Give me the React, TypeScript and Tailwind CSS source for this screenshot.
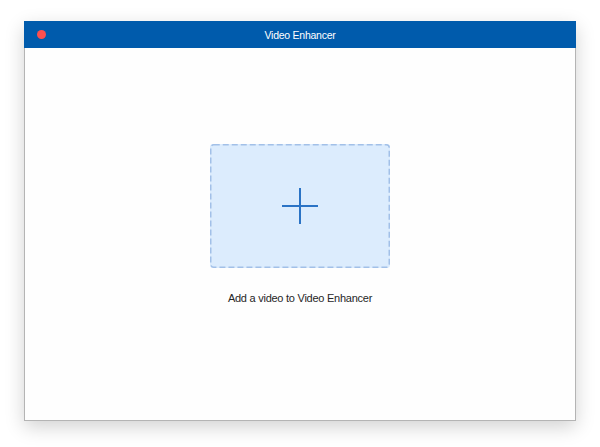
import React from "react";

export default function App() {
  return (
    <div className="w-[600px] h-[447px] bg-white pt-[21px] pl-[24px]" style={{ fontFamily: '"Liberation Sans", Arial, sans-serif' }}>
      <div className="w-[552px] h-[400px] flex flex-col bg-[#fefefe] border-x border-b border-[#b4b4b4] shadow-[0_6px_18px_rgba(0,0,0,0.18)]">
        <div className="h-[27px] bg-[#005bac] flex items-center relative -mx-px">
          <div className="absolute left-[13px] top-[9px] w-[9px] h-[9px] rounded-full bg-[#fd4f4f]" />
          <div className="flex-1 text-center text-white text-[10.5px] tracking-[-0.25px] leading-none pt-px">Video Enhancer</div>
        </div>
        <div className="flex flex-col items-center pt-[96px]">
          <div className="relative w-[180px] h-[124px] rounded-[3px] bg-[#dcecfd] flex items-center justify-center">
            <svg className="absolute inset-0" width="180" height="124" viewBox="0 0 180 124">
              <rect x="0.75" y="0.75" width="178.5" height="122.5" rx="3" fill="none" stroke="#a2c0e8" strokeWidth="1.5" strokeDasharray="6 3" />
            </svg>
            <svg width="38" height="38" viewBox="0 0 38 38" className="relative">
              <path d="M19 1V37M1 19H37" stroke="#2b73c5" strokeWidth="2" fill="none" />
            </svg>
          </div>
          <div className="mt-[25px] text-[11px] tracking-[-0.25px] text-[#262626] leading-none">Add a video to Video Enhancer</div>
        </div>
      </div>
    </div>
  );
}
